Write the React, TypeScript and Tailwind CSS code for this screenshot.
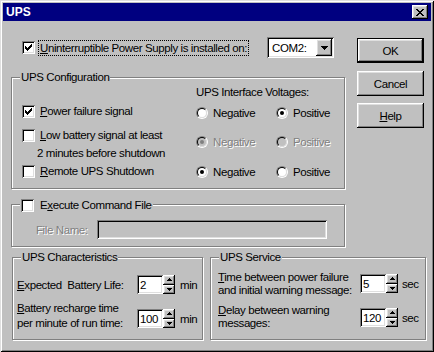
import React from "react";

const FONT = "font-['Liberation_Sans',Arial,sans-serif]";
const TXT = "text-[11.5px] leading-[14px] tracking-[-0.4px]";

const WINDOW =
  "shadow-[inset_1px_1px_0_#dfdfdf,inset_-1px_-1px_0_#000,inset_2px_2px_0_#fff,inset_-2px_-2px_0_#808080]";
const RAISED =
  "shadow-[inset_-1px_-1px_0_#000,inset_1px_1px_0_#fff,inset_-2px_-2px_0_#808080,inset_2px_2px_0_#dfdfdf]";
const DEFAULT_BTN =
  "shadow-[inset_0_0_0_1px_#000,inset_-2px_-2px_0_#000,inset_2px_2px_0_#fff,inset_-3px_-3px_0_#808080,inset_3px_3px_0_#dfdfdf]";
const SUNKEN =
  "shadow-[inset_1px_1px_0_#808080,inset_-1px_-1px_0_#fff,inset_2px_2px_0_#000,inset_-2px_-2px_0_#dfdfdf]";
const ETCHED = "border border-[#808080] shadow-[inset_1px_1px_0_#fff,1px_1px_0_#fff]";
const DISABLED = "text-[#808080] [text-shadow:1px_1px_0_#fff]";

function Key({ children }: { children: React.ReactNode }) {
  return <span className="underline">{children}</span>;
}

function Checkbox({ checked = false }: { checked?: boolean }) {
  return (
    <span
      className={`flex h-[13px] w-[13px] shrink-0 items-center justify-center bg-white ${SUNKEN}`}
    >
      {checked && (
        <svg width="7" height="7" viewBox="0 0 7 7" shapeRendering="crispEdges">
          <path
            d="M0 2h1v3H0zM1 3h1v3H1zM2 4h1v3H2zM3 3h1v3H3zM4 2h1v3H4zM5 1h1v3H5zM6 0h1v3H6z"
            fill="#000"
          />
        </svg>
      )}
    </span>
  );
}

function Radio({ checked = false, disabled = false }: { checked?: boolean; disabled?: boolean }) {
  return (
    <span className="flex h-[12px] w-[12px] shrink-0 items-center justify-center rounded-full border border-t-[#808080] border-r-white border-b-white border-l-[#808080]">
      <span
        className={`flex h-[10px] w-[10px] items-center justify-center rounded-full border border-t-black border-r-[#dfdfdf] border-b-[#dfdfdf] border-l-black ${
          disabled ? "bg-[#c0c0c0]" : "bg-white"
        }`}
      >
        {checked && (
          <span className={`h-[4px] w-[4px] rounded-full ${disabled ? "bg-[#808080]" : "bg-black"}`} />
        )}
      </span>
    </span>
  );
}

function RadioItem({
  label,
  checked,
  disabled,
  wide,
}: {
  label: string;
  checked?: boolean;
  disabled?: boolean;
  wide?: boolean;
}) {
  return (
    <div className={`flex items-center ${wide ? "w-[80px]" : ""}`}>
      <Radio checked={checked} disabled={disabled} />
      <span className={`ml-[5px] ${TXT} ${disabled ? DISABLED : ""}`}>{label}</span>
    </div>
  );
}

function Group({
  title,
  className,
  children,
}: {
  title: React.ReactNode;
  className: string;
  children?: React.ReactNode;
}) {
  return (
    <div className={`relative ${ETCHED} ${className}`}>
      <div className={`absolute top-[-8px] left-[8px] bg-[#c0c0c0] px-[1px] ${TXT}`}>{title}</div>
      {children}
    </div>
  );
}

function Arrow({ up }: { up?: boolean }) {
  return (
    <svg width="5" height="3" viewBox="0 0 5 3" shapeRendering="crispEdges">
      <path d={up ? "M2 0h1v1H2zM1 1h3v1H1zM0 2h5v1H0z" : "M0 0h5v1H0zM1 1h3v1H1zM2 2h1v1H2z"} fill="#000" />
    </svg>
  );
}

function Spin({ value }: { value: string }) {
  return (
    <div className="flex shrink-0">
      <div className={`flex h-[19px] w-[26px] items-center bg-white pl-[3px] ${SUNKEN} ${TXT}`}>
        {value}
      </div>
      <div className="flex h-[19px] w-[12px] flex-col">
        <div className={`flex flex-1 items-center justify-center bg-[#c0c0c0] ${RAISED}`}>
          <Arrow up />
        </div>
        <div className={`flex flex-1 items-center justify-center bg-[#c0c0c0] ${RAISED}`}>
          <Arrow />
        </div>
      </div>
    </div>
  );
}

function Button({ children, isDefault = false }: { children: React.ReactNode; isDefault?: boolean }) {
  return (
    <div
      className={`flex h-[25px] w-[67px] items-center justify-center bg-[#c0c0c0] ${
        isDefault ? DEFAULT_BTN : RAISED
      } ${TXT}`}
    >
      {children}
    </div>
  );
}

export default function App() {
  return (
    <div
      className={`flex h-[352px] w-[434px] flex-col bg-[#c0c0c0] p-[3px] text-black ${FONT} ${WINDOW}`}
    >
      {/* title bar */}
      <div className="flex h-[18px] shrink-0 items-center justify-between bg-[#000080] pr-[3px] pl-[3px]">
        <span className="text-[12px] leading-none font-bold text-white">UPS</span>
        <div className={`flex h-[14px] w-[16px] items-center justify-center bg-[#c0c0c0] ${RAISED}`}>
          <svg width="8" height="7" viewBox="0 0 8 7" shapeRendering="crispEdges">
            <path
              d="M0 0h2v1H0zM6 0h2v1H6zM1 1h2v1H1zM5 1h2v1H5zM2 2h4v1H2zM3 3h2v1H3zM2 4h4v1H2zM1 5h2v1H1zM5 5h2v1H5zM0 6h2v1H0zM6 6h2v1H6z"
              fill="#000"
            />
          </svg>
        </div>
      </div>

      <div className="flex">
        {/* left column */}
        <div className="mt-[16px] ml-[8px] flex w-[334px] flex-col">
          <div className="flex h-[21px] items-center">
            <span className="ml-[11px]">
              <Checkbox checked />
            </span>
            <span className={`ml-[3px] border border-dotted border-black px-[1px] ${TXT}`}>
              <Key>U</Key>ninterruptible Power Supply is installed on:
            </span>
            <div className={`mr-[11px] ml-auto flex h-[21px] w-[67px] items-center bg-white p-[2px] ${SUNKEN}`}>
              <span className={`flex-1 pl-[3px] ${TXT}`}>COM2:</span>
              <span className={`flex h-[17px] w-[16px] items-center justify-center bg-[#c0c0c0] ${RAISED}`}>
                <svg width="7" height="4" viewBox="0 0 7 4" shapeRendering="crispEdges">
                  <path d="M0 0h7v1H0zM1 1h5v1H1zM2 2h3v1H2zM3 3h1v1H3z" fill="#000" />
                </svg>
              </span>
            </div>
          </div>

          <Group title="UPS Configuration" className="mt-[19px] flex h-[112px]">
            <div className="flex w-[184px] flex-col pl-[10px]">
              <div className="mt-[26px] flex h-[14px] items-center">
                <Checkbox checked />
                <span className={`ml-[5px] ${TXT}`}>
                  <Key>P</Key>ower failure signal
                </span>
              </div>
              <div className="mt-[10px] flex h-[14px] items-center">
                <Checkbox />
                <span className={`ml-[5px] ${TXT}`}>
                  <Key>L</Key>ow battery signal at least
                </span>
              </div>
              <div className={`mt-[4px] ml-[15px] ${TXT}`}>2 minutes before shutdown</div>
              <div className="mt-[4px] flex h-[14px] items-center">
                <Checkbox />
                <span className={`ml-[5px] ${TXT}`}>
                  <Key>R</Key>emote UPS Shutdown
                </span>
              </div>
            </div>
            <div className="flex flex-col">
              <div className={`mt-[7px] ${TXT}`}>UPS Interface Voltages:</div>
              <div className="mt-[7px] flex h-[14px]">
                <RadioItem label="Negative" wide />
                <RadioItem label="Positive" checked />
              </div>
              <div className="mt-[15px] flex h-[14px]">
                <RadioItem label="Negative" checked disabled wide />
                <RadioItem label="Positive" disabled />
              </div>
              <div className="mt-[16px] flex h-[14px]">
                <RadioItem label="Negative" checked wide />
                <RadioItem label="Positive" />
              </div>
            </div>
          </Group>

          <div className={`relative mt-[15px] h-[43px] ${ETCHED}`}>
            <div className="absolute top-[-7px] left-[8px] flex items-center bg-[#c0c0c0] px-[1px]">
              <Checkbox />
              <span className={`ml-[6px] ${TXT}`}>
                E<Key>x</Key>ecute Command File
              </span>
            </div>
            <div className="flex items-center pt-[15px] pl-[24px]">
              <span className={`w-[61px] ${TXT} ${DISABLED}`}>File Name:</span>
              <div className={`h-[19px] w-[230px] bg-[#c0c0c0] ${SUNKEN}`} />
            </div>
          </div>
        </div>

        {/* buttons */}
        <div className="mt-[17px] ml-[12px] flex w-[67px] flex-col">
          <Button isDefault>OK</Button>
          <div className="mt-[8px]">
            <Button>Cancel</Button>
          </div>
          <div className="mt-[7px]">
            <Button>
              <Key>H</Key>elp
            </Button>
          </div>
        </div>
      </div>

      <div className="mt-[10px] flex">
        <Group title="UPS Characteristics" className="ml-[9px] h-[83px] w-[191px]">
          <div className="flex flex-col pl-[4px]">
            <div className="mt-[17px] flex h-[19px] items-center">
              <span className={`w-[120px] whitespace-pre ${TXT}`}>
                <Key>E</Key>xpected  Battery Life:
              </span>
              <Spin value="2" />
              <span className={`ml-[5px] ${TXT}`}>min</span>
            </div>
            <div className="mt-[7px] flex items-start">
              <span className="w-[120px] text-[11.5px] leading-[15px] tracking-[-0.4px]">
                <Key>B</Key>attery recharge time
                <br />
                per minute of run time:
              </span>
              <div className="mt-[8px] flex items-center">
                <Spin value="100" />
                <span className={`ml-[5px] ${TXT}`}>min</span>
              </div>
            </div>
          </div>
        </Group>

        <Group title="UPS Service" className="ml-[7px] h-[83px] w-[216px]">
          <div className="flex flex-col pl-[7px]">
            <div className="mt-[13px] flex items-start">
              <span className="w-[142px] text-[11.5px] leading-[13px] tracking-[-0.4px]">
                <Key>T</Key>ime between power failure
                <br />
                and initial warning message:
              </span>
              <div className="mt-[3px] flex items-center">
                <Spin value="5" />
                <span className={`ml-[4px] ${TXT}`}>sec</span>
              </div>
            </div>
            <div className="mt-[7px] flex items-start">
              <span className="w-[142px] text-[11.5px] leading-[13px] tracking-[-0.4px]">
                <Key>D</Key>elay between warning
                <br />
                messages:
              </span>
              <div className="mt-[4px] flex items-center">
                <Spin value="120" />
                <span className={`ml-[4px] ${TXT}`}>sec</span>
              </div>
            </div>
          </div>
        </Group>
      </div>
    </div>
  );
}
